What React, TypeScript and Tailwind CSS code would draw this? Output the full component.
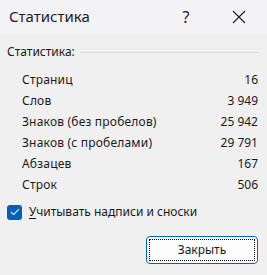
import React from "react";

const rows: [string, string][] = [
  ["Страниц", "16"],
  ["Слов", "3 949"],
  ["Знаков (без пробелов)", "25 942"],
  ["Знаков (с пробелами)", "29 791"],
  ["Абзацев", "167"],
  ["Строк", "506"],
];

export default function App() {
  return (
    <div
      className="w-[267px] h-[275px] bg-[#f0f0f0] flex flex-col text-[#1a1a1a] overflow-hidden"
      style={{ fontFamily: '"Noto Sans", "Open Sans", sans-serif' }}
    >
      <div className="h-[33px] bg-[#f3f3f5] flex items-center shrink-0">
        <div className="pl-[9px] text-[15px] text-[#1c1c1c] flex-1 leading-none">Статистика</div>
        <div className="w-[46px] mr-[6px] text-center text-[16px] leading-none text-[#1c1c1c]">?</div>
        <div className="w-[48px] mr-[4px] flex items-center justify-center">
          <svg width="14" height="14" viewBox="0 0 14 14">
            <path d="M1 1 L13 13 M13 1 L1 13" stroke="#1c1c1c" strokeWidth="1.1" fill="none" />
          </svg>
        </div>
      </div>
      <div className="flex flex-col px-[7px] pt-[11px] text-[12px] leading-[16px]">
        <div className="flex items-center gap-[5px]">
          <span>Статистика:</span>
          <div className="flex-1 h-px bg-[#d9d9d9] mr-[2px]" />
        </div>
        <div className="flex flex-col gap-[5px] pl-[15px] pr-[2px] mt-[12px]">
          {rows.map(([l, v]) => (
            <div key={l} className="flex justify-between h-[16px]">
              <span className="tracking-[0.2px]">{l}</span>
              <span>{v}</span>
            </div>
          ))}
        </div>
        <div className="flex items-center gap-[7px] mt-[11px]">
          <div className="w-[15px] h-[15px] rounded-[3px] bg-[#005fb8] flex items-center justify-center">
            <svg width="10" height="8" viewBox="0 0 10 8">
              <path d="M1 4.2 L3.6 6.6 L9 1.2" stroke="white" strokeWidth="1.1" fill="none" />
            </svg>
          </div>
          <span>
            <span className="underline underline-offset-2">У</span>читывать надписи и сноски
          </span>
        </div>
        <div className="flex justify-end mt-[16px] pr-[2px]">
          <div className="w-[112px] h-[28px] rounded-[4px] border border-[#0067c0] bg-[#fdfdfd] p-[2px]">
            <div className="w-full h-full border border-dotted border-[#000] flex items-center justify-center text-[#1a1a1a]">
              Закрыть
            </div>
          </div>
        </div>
      </div>
    </div>
  );
}
